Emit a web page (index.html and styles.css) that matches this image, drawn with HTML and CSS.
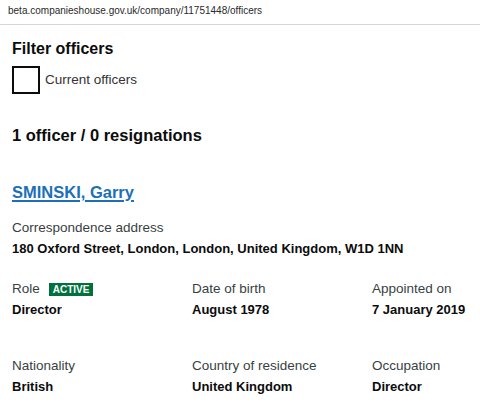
FILE: index.html
```html
<!DOCTYPE html>
<html>
<head>
<meta charset="utf-8">
<link rel="stylesheet" href="styles.css">
</head>
<body>
<div class="urlbar">beta.companieshouse.gov.uk/company/11751448/officers</div>
<main class="page">
  <h2 class="filter-title">Filter officers</h2>
  <label class="check">
    <span class="box"></span>
    <span class="check-label">Current officers</span>
  </label>
  <h2 class="count">1 officer / 0 resignations</h2>
  <a class="name" href="#">SMINSKI, Garry</a>
  <div class="label addr-label">Correspondence address</div>
  <div class="value">180 Oxford Street, London, London, United Kingdom, W1D 1NN</div>
  <div class="grid first">
    <div>
      <div class="label">Role <span class="badge">ACTIVE</span></div>
      <div class="value">Director</div>
    </div>
    <div>
      <div class="label">Date of birth</div>
      <div class="value">August 1978</div>
    </div>
    <div>
      <div class="label">Appointed on</div>
      <div class="value">7 January 2019</div>
    </div>
  </div>
  <div class="grid second">
    <div>
      <div class="label">Nationality</div>
      <div class="value">British</div>
    </div>
    <div>
      <div class="label">Country of residence</div>
      <div class="value">United Kingdom</div>
    </div>
    <div>
      <div class="label">Occupation</div>
      <div class="value">Director</div>
    </div>
  </div>
</main>
</body>
</html>
```
FILE: styles.css
```css
html, body {
  margin: 0;
  padding: 0;
  background: #fff;
}
body {
  font-family: "Liberation Sans", Arial, sans-serif;
  color: #0b0c0c;
}
.urlbar {
  height: 25px;
  box-sizing: border-box;
  padding: 4px 0 0 8px;
  font-family: "Liberation Sans", Arial, sans-serif;
  font-size: 10px;
  line-height: 14px;
  color: #2a2a2a;
  border-bottom: 1px solid #d6d6d6;
}
.page {
  padding: 0 12px;
}
.filter-title {
  margin: 14px 0 0;
  font-size: 16px;
  font-weight: bold;
  line-height: 20px;
}
.check {
  display: flex;
  align-items: center;
  gap: 5px;
  margin-top: 7px;
}
.box {
  width: 24px;
  height: 24px;
  border: 2px solid #0b0c0c;
  display: block;
}
.check-label {
  font-size: 13.5px;
  color: #333;
  margin-top: -2px;
}
.count {
  margin: 30px 0 0;
  font-size: 16.5px;
  font-weight: bold;
  line-height: 22px;
}
.name {
  display: inline-block;
  margin-top: 36px;
  font-size: 16.5px;
  font-weight: bold;
  line-height: 20px;
  color: #1d70b8;
  text-decoration: underline;
  text-decoration-thickness: 1.5px;
  text-underline-offset: 2px;
}
.label {
  font-size: 13.5px;
  color: #383f43;
  line-height: 16px;
  display: flex;
  align-items: center;
  gap: 9px;
}
.addr-label {
  margin-top: 18px;
}
.value {
  font-size: 13px;
  font-weight: bold;
  line-height: 16px;
  margin-top: 5px;
}
.grid {
  display: grid;
  grid-template-columns: 180px 180px 1fr;
}
.first {
  margin-top: 24px;
}
.second {
  margin-top: 40px;
}
.badge {
  background: #00703c;
  color: #fff;
  font-size: 10px;
  font-weight: bold;
  padding: 1px 4px;
  line-height: 11px;
}
```
